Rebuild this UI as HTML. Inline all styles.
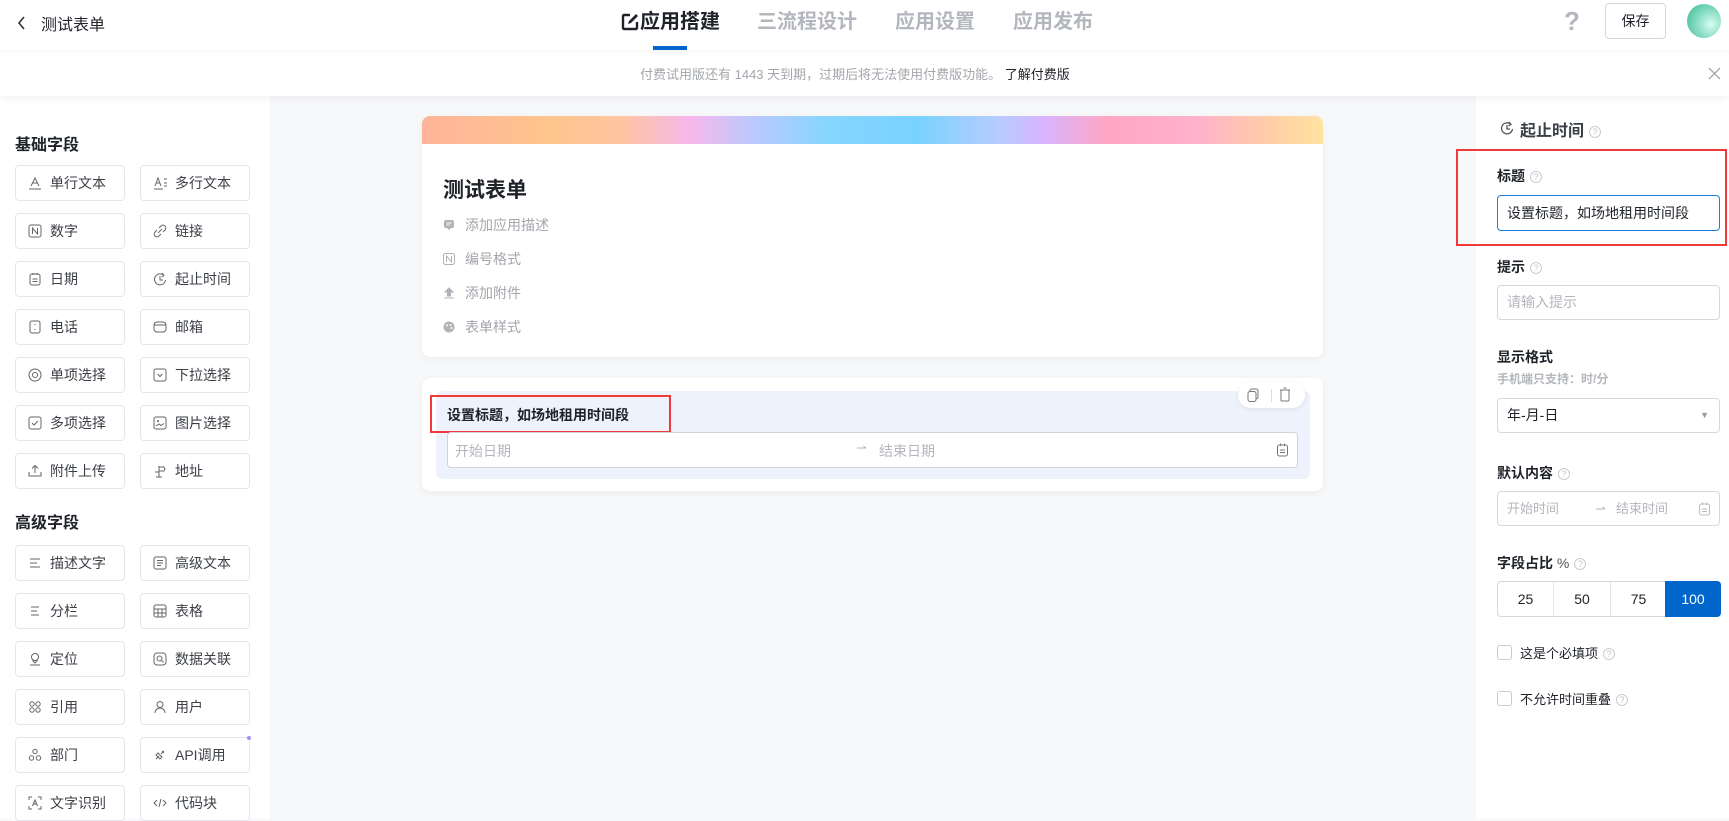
<!DOCTYPE html>
<html><head><meta charset="utf-8"><style>
*{box-sizing:border-box;margin:0;padding:0}
body{width:1729px;height:819px;overflow:hidden;background:#f7f8fa;font-family:"Liberation Sans","Noto Sans CJK SC",sans-serif;color:#1f2329;position:relative}
.abs{position:absolute}
.hdr{left:0;top:0;width:1729px;height:50px;background:#fff;box-shadow:0 2px 6px rgba(0,0,0,.04);z-index:2}
.ban{left:0;top:50px;width:1729px;height:46px;background:#fff;box-shadow:0 3px 8px rgba(0,0,0,.05);z-index:1}
.tab{top:8px;font-size:20px;font-weight:bold;color:#b3b6bc;line-height:28px}
.lp{left:0;top:96px;width:270px;height:723px;background:#fff}
.rp{left:1476px;top:96px;width:253px;height:723px;background:#fff}
.sec{font-size:16px;font-weight:bold;color:#1f2329;left:15px}
.btn{width:110px;height:36px;border:1px solid #e4e6eb;border-radius:4px;background:#fff;font-size:14px;color:#3b3f46;line-height:34px}
.btn svg{position:absolute;left:12px;top:10px}
.btn span{position:absolute;left:34px}
.card{background:#fff;border-radius:8px;box-shadow:0 2px 8px rgba(0,0,0,.05)}
.item{font-size:14px;color:#a3a6ab;left:465px}
.lab{font-size:14px;font-weight:bold;color:#1f2329;left:1497px}
.q{display:inline-block;width:12px;height:12px;border:1px solid #c9ccd1;border-radius:50%;font-size:9px;line-height:10px;text-align:center;color:#c0c3c8;font-weight:normal;vertical-align:1px;margin-left:5px}
.inp{left:1497px;width:223px;height:35px;border:1px solid #d5d8de;border-radius:4px;background:#fff;font-size:14px;line-height:33px;padding-left:9px}
</style></head><body>
<div class="abs hdr">
 <svg class="abs" style="left:17px;top:16px" width="10" height="14" viewBox="0 0 10 14"><path d="M7 1L2 7l5 6" stroke="#333" stroke-width="1.6" fill="none"/></svg>
 <div class="abs" style="left:41px;top:11px;font-size:16px;color:#1f2329">测试表单</div>
 <svg class="abs" style="left:620px;top:12px" width="20" height="20" viewBox="0 0 20 20"><path d="M10 3H4a1 1 0 0 0-1 1v12a1 1 0 0 0 1 1h12a1 1 0 0 0 1-1v-6" stroke="#1f2329" stroke-width="2.4" fill="none"/><path d="M8 12l1-3 7-7 2 2-7 7z" fill="#1f2329"/></svg>
 <div class="abs tab" style="left:640px;color:#1f2329">应用搭建</div>
 <div class="abs" style="left:653px;top:46px;width:34px;height:4px;background:#0066cc"></div>
 <div class="abs tab" style="left:757px">三流程设计</div>
 <div class="abs tab" style="left:895px">应用设置</div>
 <div class="abs tab" style="left:1013px">应用发布</div>
 <div class="abs" style="left:1564px;top:6px;font-size:26px;font-weight:bold;color:#b3b6bc">?</div>
 <div class="abs" style="left:1605px;top:3px;width:61px;height:36px;border:1px solid #d5d8de;border-radius:4px;font-size:14px;text-align:center;line-height:34px">保存</div>
 <div class="abs" style="left:1687px;top:4px;width:34px;height:34px;border-radius:50%;background:radial-gradient(circle at 70% 60%,#d8fbf0 0%,#8fe0c8 40%,#35b590 100%)"></div>
</div>
<div class="abs ban">
 <div class="abs" style="left:640px;top:14px;font-size:13px;color:#a3a6ab">付费试用版还有 1443 天到期，过期后将无法使用付费版功能。 <span style="color:#1f2329">了解付费版</span></div>
 <svg class="abs" style="left:1708px;top:17px" width="13" height="13" viewBox="0 0 13 13"><path d="M1 1l11 11M12 1L1 12" stroke="#aaa" stroke-width="1.4"/></svg>
</div>
<div class="abs lp">
 <div class="abs sec" style="top:35px">基础字段</div>
 <div class="abs sec" style="top:413px">高级字段</div>
</div>
<div id="btns"></div>
<!-- left buttons -->
<div class="abs btn" style="left:15px;top:165px"><svg width="14" height="14"><path d="M3 10L7 2l4 8M4.5 7h5M1 13h12" stroke="#666" fill="none"/></svg><span>单行文本</span></div>
<div class="abs btn" style="left:140px;top:165px"><svg width="16" height="14"><path d="M2 10L5 2l3 8M3 7h4M1 13h9M11 3h3M11 7h3M11 10h3" stroke="#666" fill="none"/></svg><span>多行文本</span></div>
<div class="abs btn" style="left:15px;top:213px"><svg width="14" height="14"><rect x="1" y="1" width="12" height="12" rx="2" stroke="#666" fill="none"/><path d="M4.5 10V4l5 6V4" stroke="#666" fill="none"/></svg><span>数字</span></div>
<div class="abs btn" style="left:140px;top:213px"><svg width="14" height="14"><path d="M6 4l2-2a2.5 2.5 0 0 1 4 4l-2 2M8 10l-2 2a2.5 2.5 0 0 1-4-4l2-2M5 9l4-4" stroke="#666" fill="none"/></svg><span>链接</span></div>
<div class="abs btn" style="left:15px;top:261px"><svg width="14" height="14"><rect x="2" y="2" width="10" height="11" rx="2" stroke="#666" fill="none"/><path d="M5 1v2M9 1v2M4.5 7h5M4.5 9.5h5" stroke="#666"/></svg><span>日期</span></div>
<div class="abs btn" style="left:140px;top:261px"><svg width="14" height="14"><path d="M11 3.5A5.5 5.5 0 1 0 12.5 8M9 1l2 2.5-2.5 1.5M7 4v4h3" stroke="#666" fill="none"/></svg><span>起止时间</span></div>
<div class="abs btn" style="left:15px;top:309px"><svg width="14" height="14"><rect x="2" y="1" width="10" height="12" rx="2" stroke="#666" fill="none"/><path d="M7 4v1M7 9v1" stroke="#666"/></svg><span>电话</span></div>
<div class="abs btn" style="left:140px;top:309px"><svg width="14" height="14"><rect x="1" y="2" width="12" height="10" rx="3" stroke="#666" fill="none"/><path d="M1.5 5h11" stroke="#666"/></svg><span>邮箱</span></div>
<div class="abs btn" style="left:15px;top:357px"><svg width="14" height="14"><circle cx="7" cy="7" r="6" stroke="#666" fill="none"/><circle cx="7" cy="7" r="2.5" stroke="#666" fill="none"/></svg><span>单项选择</span></div>
<div class="abs btn" style="left:140px;top:357px"><svg width="14" height="14"><rect x="1" y="1" width="12" height="12" rx="2" stroke="#666" fill="none"/><path d="M4.5 6l2.5 2.5L9.5 6" stroke="#666" fill="none"/></svg><span>下拉选择</span></div>
<div class="abs btn" style="left:15px;top:405px"><svg width="14" height="14"><rect x="1" y="1" width="12" height="12" rx="2" stroke="#666" fill="none"/><path d="M4 7l2 2 4-4" stroke="#666" fill="none"/></svg><span>多项选择</span></div>
<div class="abs btn" style="left:140px;top:405px"><svg width="14" height="14"><rect x="1" y="1" width="12" height="12" rx="2" stroke="#666" fill="none"/><circle cx="5" cy="5" r="1" fill="#666"/><path d="M3 10l3-2 2 1.5 3-2" stroke="#666" fill="none"/></svg><span>图片选择</span></div>
<div class="abs btn" style="left:15px;top:453px"><svg width="14" height="14"><path d="M7 9V1.5M4 4.5l3-3 3 3M1 8v4h12V8" stroke="#666" fill="none"/></svg><span>附件上传</span></div>
<div class="abs btn" style="left:140px;top:453px"><svg width="14" height="14"><path d="M6 2v11M6 3h5l1 2-1 2H6M2 8h4M3 13h6" stroke="#666" fill="none"/></svg><span>地址</span></div>
<div class="abs btn" style="left:15px;top:545px"><svg width="14" height="14"><path d="M2 3h10M2 7h7M2 11h10" stroke="#666"/></svg><span>描述文字</span></div>
<div class="abs btn" style="left:140px;top:545px"><svg width="14" height="14"><rect x="1" y="1" width="12" height="12" rx="2" stroke="#666" fill="none"/><path d="M4 4.5h6M4 7h6M4 9.5h4" stroke="#666"/></svg><span>高级文本</span></div>
<div class="abs btn" style="left:15px;top:593px"><svg width="14" height="14"><path d="M3 3h8M3 7h6M3 11h8" stroke="#666"/></svg><span>分栏</span></div>
<div class="abs btn" style="left:140px;top:593px"><svg width="14" height="14"><rect x="1" y="1" width="12" height="12" rx="2" stroke="#666" fill="none"/><path d="M1 5h12M1 9h12M5 5v8M9 5v8" stroke="#666"/></svg><span>表格</span></div>
<div class="abs btn" style="left:15px;top:641px"><svg width="14" height="14"><circle cx="7" cy="5" r="3.5" stroke="#666" fill="none"/><path d="M4.5 8L7 11l2.5-3M2 13h10" stroke="#666" fill="none"/></svg><span>定位</span></div>
<div class="abs btn" style="left:140px;top:641px"><svg width="14" height="14"><rect x="1" y="1" width="12" height="12" rx="3" stroke="#666" fill="none"/><circle cx="6.5" cy="6.5" r="2.5" stroke="#666" fill="none"/><path d="M8.5 8.5l2 2" stroke="#666"/></svg><span>数据关联</span></div>
<div class="abs btn" style="left:15px;top:689px"><svg width="14" height="14"><circle cx="4" cy="4" r="2.2" stroke="#666" fill="none"/><circle cx="10" cy="4" r="2.2" stroke="#666" fill="none"/><circle cx="4" cy="10" r="2.2" stroke="#666" fill="none"/><circle cx="10" cy="10" r="2.2" stroke="#666" fill="none"/></svg><span>引用</span></div>
<div class="abs btn" style="left:140px;top:689px"><svg width="14" height="14"><circle cx="7" cy="4.5" r="3" stroke="#666" fill="none"/><path d="M2 13a5 5 0 0 1 10 0" stroke="#666" fill="none"/></svg><span>用户</span></div>
<div class="abs btn" style="left:15px;top:737px"><svg width="14" height="14"><circle cx="7" cy="3.5" r="2.2" stroke="#666" fill="none"/><circle cx="3.5" cy="10" r="2.2" stroke="#666" fill="none"/><circle cx="10.5" cy="10" r="2.2" stroke="#666" fill="none"/></svg><span>部门</span></div>
<div class="abs btn" style="left:140px;top:737px"><svg width="14" height="14"><path d="M3 11l3-3M8 6l3-3M5 5l4 4-2 2-4-4zM9 3l2 2" stroke="#666" fill="none"/></svg><span>API调用</span><div class="abs" style="right:-2px;top:-2px;width:4px;height:4px;border-radius:50%;background:#a78bfa"></div></div>
<div class="abs btn" style="left:15px;top:785px"><svg width="14" height="14"><path d="M1 4V1h3M10 1h3v3M13 10v3h-3M4 13H1v-3M4.5 10L7 4l2.5 6M5.5 8h3" stroke="#666" fill="none"/></svg><span>文字识别</span></div>
<div class="abs btn" style="left:140px;top:785px"><svg width="14" height="14"><path d="M4 4L1 7l3 3M10 4l3 3-3 3M8 3L6 11" stroke="#666" fill="none"/></svg><span>代码块</span></div>

<div class="abs card" style="left:422px;top:116px;width:901px;height:241px;overflow:hidden">
 <div style="height:28px;background:linear-gradient(90deg,#ffb49a 0%,#ffc58c 14%,#ffc5a0 22%,#f6b8ec 30%,#b9c9ff 37%,#86d6ff 45%,#78d2ff 55%,#b8ccff 64%,#d8b4ff 69%,#ffa6c4 76%,#ffb2cc 86%,#ffcaaa 93%,#ffe3a0 100%)"></div>
</div>
<div class="abs" style="left:443px;top:174px;font-size:21px;font-weight:bold;color:#1f2329">测试表单</div>
<svg class="abs" style="left:443px;top:219px" width="12" height="12"><rect x="1" y="1" width="10" height="8" rx="2" fill="#b0b3b8"/><path d="M4 9l2 2 2-2" fill="#b0b3b8"/><path d="M3.5 4h5M3.5 6h3" stroke="#fff"/></svg>
<div class="abs item" style="top:215px">添加应用描述</div>
<svg class="abs" style="left:443px;top:253px" width="12" height="12"><rect x=".5" y=".5" width="11" height="11" rx="2" stroke="#b0b3b8" fill="none"/><path d="M3.5 9V3l5 6V3" stroke="#b0b3b8" fill="none"/></svg>
<div class="abs item" style="top:249px">编号格式</div>
<svg class="abs" style="left:443px;top:287px" width="12" height="12"><path d="M6 1L2 5h2.5v4h3V5H10zM1 11h10" fill="#b0b3b8" stroke="#b0b3b8" stroke-width="1"/></svg>
<div class="abs item" style="top:283px">添加附件</div>
<svg class="abs" style="left:443px;top:321px" width="12" height="12"><circle cx="6" cy="6" r="5.5" fill="#b0b3b8"/><circle cx="4" cy="4.5" r="1" fill="#fff"/><circle cx="7.5" cy="4" r="1" fill="#fff"/><circle cx="8.5" cy="7" r="1" fill="#fff"/></svg>
<div class="abs item" style="top:317px">表单样式</div>

<div class="abs card" style="left:422px;top:378px;width:901px;height:113px"></div>
<div class="abs" style="left:436px;top:391px;width:874px;height:88px;background:#eef2fc;border-radius:6px"></div>
<div class="abs" style="left:1238px;top:382px;width:67px;height:26px;background:#fff;border-radius:13px;box-shadow:0 1px 4px rgba(0,0,0,.08)"></div>
<svg class="abs" style="left:1246px;top:388px" width="14" height="14"><rect x="4" y="1" width="8" height="10" rx="2" stroke="#777" fill="none"/><rect x="2" y="3.5" width="8" height="10" rx="2" stroke="#777" fill="#fff"/></svg>
<div class="abs" style="left:1271px;top:389px;width:1px;height:13px;background:#ddd"></div>
<svg class="abs" style="left:1279px;top:387px" width="12" height="15"><path d="M2 3h8v10a1 1 0 0 1-1 1H3a1 1 0 0 1-1-1zM1 3h10M4.5 1h3" stroke="#777" fill="none"/></svg>
<div class="abs" style="left:430px;top:395px;width:241px;height:38px;border:2.5px solid #f03a3a"></div>
<div class="abs" style="left:447px;top:405px;font-size:14px;font-weight:bold;color:#1f2329">设置标题，如场地租用时间段</div>
<div class="abs" style="left:447px;top:432px;width:851px;height:36px;background:#fff;border:1px solid #cfd3dc;border-radius:4px"></div>
<div class="abs" style="left:455px;top:441px;font-size:14px;color:#b3b6bc">开始日期</div>
<div class="abs" style="left:856px;top:440px;font-size:13px;color:#b3b6bc">⇀</div>
<div class="abs" style="left:879px;top:441px;font-size:14px;color:#b3b6bc">结束日期</div>
<svg class="abs" style="left:1276px;top:443px" width="13" height="14"><rect x="1.5" y="2" width="10" height="11" rx="2" stroke="#777" fill="none"/><path d="M4.5 .5v2.5M8.5 .5v2.5M4 7h5M4 9.5h5" stroke="#777"/></svg>

<div class="abs rp"></div>
<svg class="abs" style="left:1500px;top:121px" width="14" height="14"><path d="M11 3.5A5.5 5.5 0 1 0 12.5 8M9 1l2 2.5-2.5 1.5M7 4v4h3" stroke="#555" fill="none" stroke-width="1.3"/></svg>
<div class="abs" style="left:1520px;top:117px;font-size:16px;font-weight:bold;color:#3b3f46">起止时间<span class="q">?</span></div>
<div class="abs" style="left:1456px;top:149px;width:271px;height:97px;border:2.5px solid #f03a3a"></div>
<div class="abs lab" style="top:166px">标题<span class="q">?</span></div>
<div class="abs inp" style="top:195px;height:36px;border-color:#1f7ae0;color:#1f2329;line-height:34px">设置标题，如场地租用时间段</div>
<div class="abs lab" style="top:257px">提示<span class="q">?</span></div>
<div class="abs inp" style="top:285px;color:#b3b6bc">请输入提示</div>
<div class="abs lab" style="top:347px">显示格式</div>
<div class="abs" style="left:1497px;top:370px;font-size:12px;font-weight:bold;color:#b3b6bc">手机端只支持：时/分</div>
<div class="abs inp" style="top:398px;color:#1f2329">年-月-日<span class="abs" style="right:10px;top:0;font-size:9px;color:#999">▼</span></div>
<div class="abs lab" style="top:463px">默认内容<span class="q">?</span></div>
<div class="abs inp" style="top:491px;color:#b3b6bc;font-size:13px">开始时间<span class="abs" style="left:97px">⇀</span><span class="abs" style="left:118px">结束时间</span>
<svg class="abs" style="left:200px;top:10px" width="13" height="14"><rect x="1.5" y="2" width="10" height="11" rx="2" stroke="#bbb" fill="none"/><path d="M4.5 .5v2.5M8.5 .5v2.5M4 7h5M4 9.5h5" stroke="#bbb"/></svg></div>
<div class="abs lab" style="top:553px">字段占比 <span style="font-weight:normal;color:#555">%</span><span class="q">?</span></div>
<div class="abs" style="left:1497px;top:581px;width:224px;height:36px;border:1px solid #d5d8de;border-radius:4px;background:#fff;font-size:14px;color:#1f2329">
 <div class="abs" style="left:0;width:55px;text-align:center;line-height:34px">25</div>
 <div class="abs" style="left:55px;top:0;width:1px;height:34px;background:#e4e6eb"></div>
 <div class="abs" style="left:56px;width:56px;text-align:center;line-height:34px">50</div>
 <div class="abs" style="left:112px;top:0;width:1px;height:34px;background:#e4e6eb"></div>
 <div class="abs" style="left:113px;width:55px;text-align:center;line-height:34px">75</div>
 <div class="abs" style="left:167px;top:-1px;width:56px;height:36px;background:#0066cc;color:#fff;text-align:center;line-height:36px;border-radius:0 4px 4px 0">100</div>
</div>
<div class="abs" style="left:1497px;top:645px;width:15px;height:15px;border:1px solid #c9ccd1;border-radius:3px;background:#fff"></div>
<div class="abs" style="left:1520px;top:643px;font-size:13px;color:#1f2329">这是个必填项<span class="q">?</span></div>
<div class="abs" style="left:1497px;top:691px;width:15px;height:15px;border:1px solid #c9ccd1;border-radius:3px;background:#fff"></div>
<div class="abs" style="left:1520px;top:689px;font-size:13px;color:#1f2329">不允许时间重叠<span class="q">?</span></div>
</body></html>
